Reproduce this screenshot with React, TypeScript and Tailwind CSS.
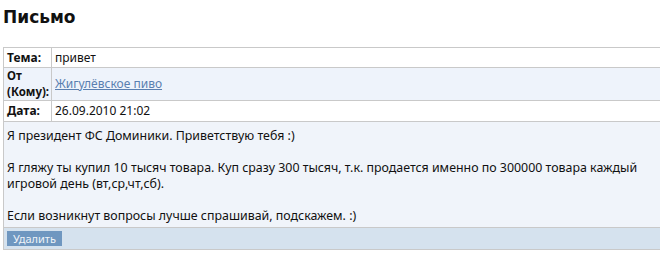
export default function App() {
  return (
    <div className="w-[660px] h-[263px] bg-white overflow-hidden" style={{ fontFamily: '"Noto Sans", "DejaVu Sans", sans-serif' }}>
      <h1 className="pl-[3px] pt-[5px] h-[47px] text-[17px] leading-[24px] font-bold text-[#111]" style={{ fontFamily: '"DejaVu Sans", sans-serif' }}>Письмо</h1>
      <div className="ml-[3px] w-[680px] border-l border-t border-[#c9c9c9] text-[12px] text-[#111]">
        <div className="flex h-[20px] border-b border-[#c9c9c9] bg-white">
          <div className="w-[48px] shrink-0 border-r border-[#c9c9c9] pl-[3px] font-bold flex items-center">Тема:</div>
          <div className="pl-[3px] flex items-center">привет</div>
        </div>
        <div className="flex h-[33px] border-b border-[#c9c9c9] bg-[#eef3fb]">
          <div className="w-[48px] shrink-0 border-r border-[#c9c9c9] pl-[3px] font-bold text-[11.5px] leading-[16px] flex flex-col justify-center">
            <span>От</span>
            <span>(Кому):</span>
          </div>
          <div className="pl-[3px] flex items-center">
            <a href="#" className="text-[#5a7fb0] underline">Жигулёвское пиво</a>
          </div>
        </div>
        <div className="flex h-[21px] border-b border-[#c9c9c9] bg-white">
          <div className="w-[48px] shrink-0 border-r border-[#c9c9c9] pl-[3px] font-bold flex items-center">Дата:</div>
          <div className="pl-[3px] flex items-center">26.09.2010 21:02</div>
        </div>
        <div className="h-[106px] border-b border-[#c9c9c9] bg-[#f0f4fa] pl-[3px] pt-[6px] text-[12.4px] leading-[16px] w-[657px]">
          <p>Я президент ФС Доминики. Приветствую тебя :)</p>
          <p className="mt-[16px]">Я гляжу ты купил 10 тысяч товара. Куп сразу 300 тысяч, т.к. продается именно по 300000 товара каждый игровой день (вт,ср,чт,сб).</p>
          <p className="mt-[16px]">Если возникнут вопросы лучше спрашивай, подскажем. :)</p>
        </div>
        <div className="h-[22px] border-b border-[#c9c9c9] bg-[#d5e2ee] pl-[3px] flex items-center">
          <button className="h-[15px] w-[55px] bg-[#6f97c0] text-[#eef3f8] text-[11px] leading-[15px] text-center">Удалить</button>
        </div>
      </div>
    </div>
  );
}
